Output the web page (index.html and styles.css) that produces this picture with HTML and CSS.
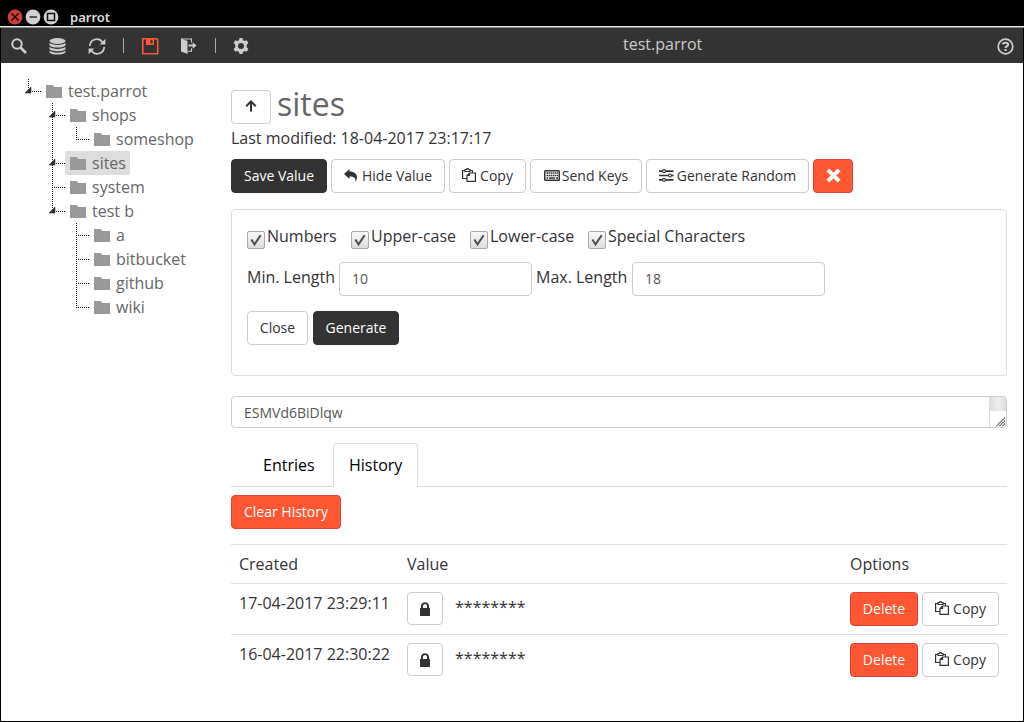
FILE: index.html
```
<!DOCTYPE html>
<html lang="en">
<head>
<meta charset="utf-8">
<title>parrot</title>
<link rel="stylesheet" href="styles.css">
</head>
<body>
<svg class="defs" width="0" height="0">
  <symbol id="folder" viewBox="0 0 16 13"><path d="M0 0.5Q0 0 .5 0H6.500L8.500 2H15.500Q16 2 16 2.500V13H0z"/></symbol>
  <symbol id="copy" viewBox="0 0 14 14"><path d="M4.500 10.500H.6V2.500H3M8 2.500H10.400V4.500M3 3.500V1.500H4.500C4.500 .2 6.500 .2 6.500 1.500H8V3.500zM7.500 5H13.400V13.400H5V7.500zM7.500 5V7.500H5" fill="none" stroke="currentColor" stroke-width="1.200"/></symbol>
  <symbol id="lock" viewBox="0 0 10 14"><path d="M0 6.500Q0 6 .6 6H1V4C1-1 9-1 9 4V6H9.400Q10 6 10 6.500V13.500Q10 14 9.400 14H.6Q0 14 0 13.500zM3 6H7V4C7 1.300 3 1.300 3 4z" fill="currentColor" fill-rule="evenodd"/></symbol>
  <symbol id="g-end" viewBox="0 0 24 24"><path class="dots" d="M11.500 0V12M11 12.500H24"/></symbol>
  <symbol id="g-mid" viewBox="0 0 24 24"><path class="dots" d="M11.500 0V24M11 12.500H24"/></symbol>
  <symbol id="g-line" viewBox="0 0 24 24"><path class="dots" d="M11.500 0V24"/></symbol>
  <symbol id="g-tri" viewBox="0 0 24 24"><path d="M8 14L14 8V14z" fill="#333" stroke="#222" stroke-width=".5"/></symbol>
  <symbol id="check" viewBox="0 0 18 18"><path d="M3.800 8.500L7.300 14L14.300 3.700" fill="none" stroke="#505050" stroke-width="2.300"/></symbol>
</svg>
<div class="window">
  <header class="titlebar">
    <svg class="controls" width="52" height="16" viewBox="0 0 52 16">
      <circle cx="8" cy="8" r="7.400" fill="#cf3c3c"/><path d="M4.500 4.500L11.500 11.500M11.500 4.500L4.500 11.500" stroke="#1c0808" stroke-width="1.500"/>
      <circle cx="26" cy="8" r="7.400" fill="#d0d0d0"/><path d="M22.500 8H30" stroke="#555" stroke-width="2"/>
      <circle cx="44" cy="8" r="7.400" fill="#d0d0d0"/><path d="M40.500 4.500H47.500V11.500H40.500z" fill="none" stroke="#111" stroke-width="1.500"/>
    </svg>
    <span class="app-name">parrot</span>
  </header>
  <nav class="toolbar">
    <svg class="tool search" width="16" height="16" viewBox="0 0 16 16"><circle cx="6" cy="6" r="4.700" fill="none" stroke="currentColor" stroke-width="2"/><path d="M9.500 9.500L15 15" stroke="currentColor" stroke-width="2.600"/></svg>
    <svg class="tool db" width="17" height="17" viewBox="0 0 17 17" fill="currentColor"><ellipse cx="8.500" cy="3" rx="8" ry="2.900"/><path d="M.5 4.800C3 7.600 14 7.600 16.500 4.800V7.200C15 10.300 2 10.300.5 7.200zM.5 8.800C3 11.600 14 11.600 16.500 8.800V11C15 14 2 14 .5 11zM.5 12.600C3 15.400 14 15.400 16.500 12.600V14.200C15 17.400 2 17.400.5 14.200z"/></svg>
    <svg class="tool sync" width="18" height="17" viewBox="0 0 18 17"><path d="M1.800 8A7 7 0 0 1 14.500 4.200M16.200 9A7 7 0 0 1 3.500 12.800" fill="none" stroke="currentColor" stroke-width="1.700"/><path d="M17.400.8V6.500H11.700zM.6 16.200V10.500H6.300z" fill="currentColor"/></svg>
    <span class="bar"></span>
    <svg class="tool save" width="17" height="17" viewBox="0 0 17 17"><path d="M.8.800H14.800L15.700 1.700V15.700H.8z" fill="none" stroke="currentColor" stroke-width="1.600"/><path d="M4 1H12V7H4zM8.500 2V5.500H10.500V2z" fill="currentColor" fill-rule="evenodd"/></svg>
    <svg class="tool exit" width="16" height="17" viewBox="0 0 16 17"><path d="M0 .5L6.500 3V16L0 13.500z" fill="currentColor"/><path d="M0 1H10.500V4.800M6.500 13.300H10.500V10.300" fill="none" stroke="currentColor" stroke-width="1.100"/><path d="M7.500 6.500H11.700V4.200L15.600 7.500L11.700 10.800V8.500H7.500z" fill="currentColor"/></svg>
    <span class="bar"></span>
    <svg class="tool gear" width="16" height="16" viewBox="0 0 16 16"><path fill="currentColor" fill-rule="evenodd" d="M6.500 0H9.500L10 2.200L11.500 3L13.700 2.200L15.400 5L13.700 6.700V9.300L15.400 11L13.700 13.800L11.500 13.100L10 13.900L9.500 16H6.500L6 13.900L4.500 13.100L2.300 13.800L.6 11L2.300 9.300V6.700L.6 5L2.300 2.200L4.500 3L6 2.200zM8 5A3 3 0 1 0 8 11A3 3 0 1 0 8 5z"/></svg>
    <span class="file-name">test.parrot</span>
    <svg class="tool help" width="17" height="17" viewBox="0 0 17 17"><circle cx="8.500" cy="8.500" r="7.300" fill="none" stroke="currentColor" stroke-width="1.700"/><path d="M5.500 6.100C6.500 4.500 11.200 4.200 11.200 6.700C11.200 8.500 8.500 8 8.500 10" fill="none" stroke="currentColor" stroke-width="2"/><path d="M7.400 11H9.600V13H7.400z" fill="currentColor"/></svg>
  </nav>
  <div class="body">
    <ul class="tree">
      <li><svg class="guide"><use href="#g-end"/><use href="#g-tri"/></svg><a class="node"><svg class="folder"><use href="#folder"/></svg>test.parrot</a></li>
      <li><i class="guide"></i><svg class="guide"><use href="#g-mid"/><use href="#g-tri"/></svg><a class="node"><svg class="folder"><use href="#folder"/></svg>shops</a></li>
      <li><i class="guide"></i><svg class="guide"><use href="#g-line"/></svg><svg class="guide"><use href="#g-end"/></svg><a class="node"><svg class="folder"><use href="#folder"/></svg>someshop</a></li>
      <li><i class="guide"></i><svg class="guide"><use href="#g-mid"/><use href="#g-tri"/></svg><a class="node selected"><svg class="folder"><use href="#folder"/></svg>sites</a></li>
      <li><i class="guide"></i><svg class="guide"><use href="#g-mid"/></svg><a class="node"><svg class="folder"><use href="#folder"/></svg>system</a></li>
      <li><i class="guide"></i><svg class="guide"><use href="#g-end"/><use href="#g-tri"/></svg><a class="node"><svg class="folder"><use href="#folder"/></svg>test b</a></li>
      <li><i class="guide"></i><i class="guide"></i><svg class="guide"><use href="#g-mid"/></svg><a class="node"><svg class="folder"><use href="#folder"/></svg>a</a></li>
      <li><i class="guide"></i><i class="guide"></i><svg class="guide"><use href="#g-mid"/></svg><a class="node"><svg class="folder"><use href="#folder"/></svg>bitbucket</a></li>
      <li><i class="guide"></i><i class="guide"></i><svg class="guide"><use href="#g-mid"/></svg><a class="node"><svg class="folder"><use href="#folder"/></svg>github</a></li>
      <li><i class="guide"></i><i class="guide"></i><svg class="guide"><use href="#g-end"/></svg><a class="node"><svg class="folder"><use href="#folder"/></svg>wiki</a></li>
    </ul>
    <main class="content">
      <div class="heading">
        <button class="btn up"><svg width="12" height="12" viewBox="0 0 12 12"><path d="M6 11.500V1.500M1.200 6.300L6 1.500L10.800 6.300" fill="none" stroke="currentColor" stroke-width="2"/></svg></button>
        <h1>sites</h1>
      </div>
      <p class="modified">Last modified: 18-04-2017 23:17:17</p>
      <div class="actions">
        <button class="btn dark w-save">Save Value</button>
        <button class="btn w-hide"><svg width="14" height="13" viewBox="0 0 14 13"><path d="M5.500 0V2.600C10.500 2.600 13 5 13 8.500C13 10 12.500 11.500 11.500 13C12 9 10 7.500 5.500 7.500V10L0 5z" fill="currentColor"/></svg>Hide Value</button>
        <button class="btn w-copy"><svg width="14" height="14"><use href="#copy"/></svg>Copy</button>
        <button class="btn w-send"><svg width="16" height="11" viewBox="0 0 16 11"><rect x=".75" y=".75" width="14.500" height="9.500" rx=".8" fill="none" stroke="currentColor" stroke-width="1.500"/><path d="M2.500 3H14M2.500 5.500H14" stroke="currentColor" stroke-width="1.700" stroke-dasharray="1.500 .5"/><path d="M2.500 8H4M4.800 8H11.200M12 8H14" stroke="currentColor" stroke-width="1.600"/></svg>Send Keys</button>
        <button class="btn w-random"><svg width="15" height="13" viewBox="0 0 15 13"><g fill="none" stroke="currentColor"><path d="M0 2.200H3M7 2.200H14.500M0 6.500H9M13 6.500H14.500M0 10.800H3M7 10.800H14.500" stroke-width="1.700"/><circle cx="5" cy="2.200" r="1.500" stroke-width="1.200"/><circle cx="11" cy="6.500" r="1.500" stroke-width="1.200"/><circle cx="5" cy="10.800" r="1.500" stroke-width="1.200"/></g></svg>Generate Random</button>
        <button class="btn red w-x"><svg width="15" height="15" viewBox="0 0 15 15"><path d="M1.800 1.800L13.200 13.200M13.200 1.800L1.800 13.200" stroke="#fff" stroke-width="4"/></svg></button>
      </div>
      <section class="panel">
        <div class="checks">
          <label class="w-num"><svg class="box"><use href="#check"/></svg>Numbers</label>
          <label class="w-up"><svg class="box"><use href="#check"/></svg>Upper-case</label>
          <label class="w-low"><svg class="box"><use href="#check"/></svg>Lower-case</label>
          <label><svg class="box"><use href="#check"/></svg>Special Characters</label>
        </div>
        <div class="lengths">
          <span class="w-min">Min. Length</span><div class="input">10</div>
          <span class="w-max">Max. Length</span><div class="input">18</div>
        </div>
        <div class="panel-actions"><button class="btn w-close">Close</button><button class="btn dark w-gen">Generate</button></div>
      </section>
      <div class="textarea"><span>ESMVd6BiDlqw</span>
        <div class="scroll"><div class="thumb"></div><svg width="16" height="16" viewBox="0 0 16 16"><path d="M6.500 15L15 6.500M9.500 15L15 9.500M12.500 15L15 12.500" stroke="#555" stroke-width="1.300" stroke-dasharray="1.600 .5"/></svg></div>
      </div>
      <div class="tabs"><span class="tab entries">Entries</span><span class="tab active">History</span></div>
      <button class="btn red w-clear">Clear History</button>
      <div class="table">
        <div class="row head"><span>Created</span><span>Value</span><span>Options</span></div>
        <div class="row"><span class="date">17-04-2017 23:29:11</span><div class="cell"><button class="btn lock"><svg width="10" height="14"><use href="#lock"/></svg></button><span class="stars">********</span></div><div class="cell opts"><button class="btn red w-del">Delete</button><button class="btn w-copy"><svg width="14" height="14"><use href="#copy"/></svg>Copy</button></div></div>
        <div class="row"><span class="date">16-04-2017 22:30:22</span><div class="cell"><button class="btn lock"><svg width="10" height="14"><use href="#lock"/></svg></button><span class="stars">********</span></div><div class="cell opts"><button class="btn red w-del">Delete</button><button class="btn w-copy"><svg width="14" height="14"><use href="#copy"/></svg>Copy</button></div></div>
      </div>
    </main>
  </div>
</div>
</body>
</html>
```
FILE: styles.css
```
* { box-sizing: border-box; }
body { margin: 0; font: 16px/24px "Open Sans", sans-serif; color: #333; background: #fff; overflow: hidden; }
.defs { position: absolute; }
.window { width: 1024px; height: 722px; display: flex; flex-direction: column; }
.titlebar { height: 28px; background: #000; border-bottom: 1px solid #888; box-shadow: inset 0 -1px #e6e6e6; display: flex; align-items: center; padding: 6px 0 0 7px; }
.controls { flex: none; }
.app-name { margin-left: 11px; font: 600 13px/16px "Noto Sans", sans-serif; color: #ddd; }
.toolbar { height: 35px; margin: 0 1px; background: #333; color: #ccc; display: flex; align-items: center; padding: 0 9px 0 10px; box-shadow: -1px 0 #000, 1px 0 #000; }
.tool { flex: none; margin-top: 1px; }
.db { margin-left: 22px; }
.sync { margin-left: 22px; }
.bar { flex: none; width: 1px; height: 15px; margin: 0 0 0 17px; background: #aaa; }
.save { margin-left: 18px; color: #ff5733; }
.exit { margin-left: 22px; }
.exit + .bar { margin-left: 18px; }
.gear { margin-left: 17px; }
.file-name { margin: -3px auto 0 374px; }
.body { flex: 1; display: flex; border: 1px solid #000; border-top: 0; }
.tree { list-style: none; margin: 0; padding: 16px 0 0 16px; width: 230px; color: #666; }
.tree li { display: flex; height: 24px; }
.guide { width: 24px; height: 24px; flex: none; }
.dots { fill: none; stroke: #111; stroke-width: 1; stroke-dasharray: 1 1; shape-rendering: crispEdges; }
.node { display: flex; align-items: center; padding: 0 4px 0 5px; border-radius: 2px; white-space: nowrap; }
.selected { background: #ddd; }
.folder { width: 16px; height: 13px; margin-right: 6px; fill: #999; }
.content { width: 776px; padding-top: 27px; }
.heading { display: flex; height: 34px; gap: 6px; }
h1 { margin: 0; font-size: 32px; line-height: 28px; font-weight: 400; color: #666; }
.btn { display: inline-flex; align-items: center; justify-content: center; gap: 4px; height: 34px; padding: 0; border: 1px solid #ccc; border-radius: 4px; background: #fff; color: #333; font: 14px/20px "Open Sans", sans-serif; white-space: nowrap; flex: none; }
.dark { background: #333; border-color: #333; color: #fff; }
.red { background: #ff5733; border-color: #d9433a; color: #fff; }
.up { width: 40px; }
.up svg { margin-top: -2px; }
.modified { margin: 2px 0 9px; white-space: nowrap; }
.actions { display: flex; gap: 4px; }
.actions svg, .opts svg { margin-top: -2px; }
.w-save { width: 96px; }
.w-hide { width: 114px; }
.w-copy { width: 77px; }
.w-send { width: 112px; gap: 2px; }
.w-random { width: 163px; gap: 3px; }
.w-x { width: 40px; }
.panel { margin-top: 16px; height: 167px; border: 1px solid #ddd; border-radius: 4px; padding: 14px 15px 15px; }
.checks { display: flex; height: 24px; white-space: nowrap; }
.checks label { display: flex; gap: 2px; }
.box { width: 18px; height: 18px; margin-top: 7px; border: 1px solid #aaa; border-radius: 2px; background: linear-gradient(#f8f8f8, #ddd); }
.w-num { width: 104px; }
.w-up { width: 119px; }
.w-low { width: 118px; }
.lengths { display: flex; margin-top: 14px; white-space: nowrap; }
.lengths span { padding-top: 3px; }
.w-min { width: 92px; }
.w-max { width: 100px; padding-left: 4px; }
.input { width: 193px; height: 34px; border: 1px solid #ccc; border-radius: 4px; padding: 6px 12px; font-size: 14px; line-height: 20px; color: #555; }
.panel-actions { display: flex; gap: 5px; margin-top: 15px; }
.w-close { width: 61px; }
.w-gen { width: 86px; }
.textarea { display: flex; justify-content: space-between; margin-top: 20px; height: 32px; border: 1px solid #ccc; border-radius: 4px; overflow: hidden; padding-left: 12px; font-size: 14px; line-height: 31px; color: #555; }
.scroll { width: 17px; border-left: 1px solid #ddd; display: flex; flex-direction: column; }
.thumb { height: 14px; background: linear-gradient(90deg, #ddd, #eee 50%, #ddd); }
.tabs { display: flex; margin: 15px 0 8px; height: 44px; border-bottom: 1px solid #ddd; color: #000; }
.tab { height: 44px; line-height: 43px; }
.entries { width: 102px; padding: 1px 0 0 32px; }
.active { width: 85px; padding-left: 15px; border: 1px solid #ddd; border-bottom: 0; border-radius: 4px 4px 0 0; background: #fff; }
.w-clear { width: 110px; display: flex; }
.table { margin-top: 15px; }
.row { display: grid; grid-template-columns: 168px 443px 149px; padding: 8px; height: 51px; border-top: 1px solid #ddd; white-space: nowrap; }
.head { height: 39px; line-height: 22px; }
.date { line-height: 22px; }
.cell { display: flex; }
.lock { width: 36px; height: 33px; }
.stars { margin-left: 12px; line-height: 30px; }
.opts { gap: 4px; }
.w-del { width: 68px; }
```
